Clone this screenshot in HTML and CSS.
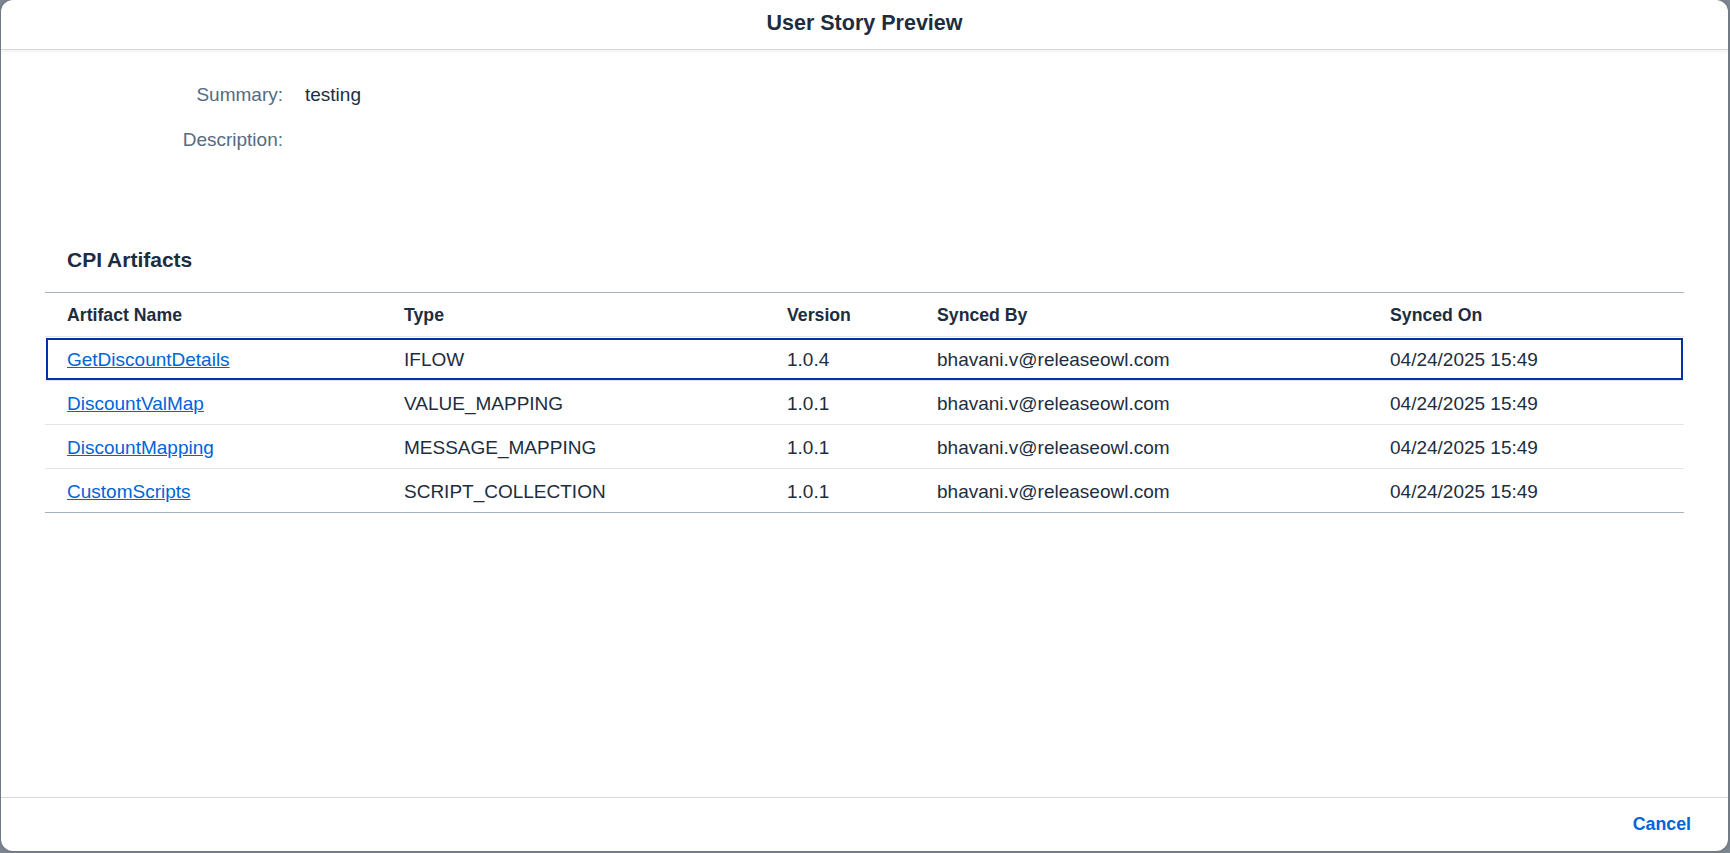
FILE: index.html
```html
<!DOCTYPE html>
<html lang="en">
<head>
<meta charset="utf-8">
<title>User Story Preview</title>
<link rel="stylesheet" href="styles.css">
</head>
<body>
<div class="dialog">
  <header class="dlg-header">User Story Preview</header>
  <main class="dlg-content">
    <div class="form">
      <div class="f-label">Summary:</div>
      <div class="f-value">testing</div>
      <div class="f-label">Description:</div>
      <div class="f-value"></div>
    </div>
    <h2 class="section-title">CPI Artifacts</h2>
    <div class="table">
      <div class="row head">
        <div class="cell">Artifact Name</div>
        <div class="cell">Type</div>
        <div class="cell">Version</div>
        <div class="cell">Synced By</div>
        <div class="cell">Synced On</div>
      </div>
      <div class="row focused">
        <div class="cell"><a class="link" href="#">GetDiscountDetails</a></div>
        <div class="cell">IFLOW</div>
        <div class="cell">1.0.4</div>
        <div class="cell">bhavani.v@releaseowl.com</div>
        <div class="cell">04/24/2025 15:49</div>
      </div>
      <div class="row">
        <div class="cell"><a class="link" href="#">DiscountValMap</a></div>
        <div class="cell">VALUE_MAPPING</div>
        <div class="cell">1.0.1</div>
        <div class="cell">bhavani.v@releaseowl.com</div>
        <div class="cell">04/24/2025 15:49</div>
      </div>
      <div class="row">
        <div class="cell"><a class="link" href="#">DiscountMapping</a></div>
        <div class="cell">MESSAGE_MAPPING</div>
        <div class="cell">1.0.1</div>
        <div class="cell">bhavani.v@releaseowl.com</div>
        <div class="cell">04/24/2025 15:49</div>
      </div>
      <div class="row last">
        <div class="cell"><a class="link" href="#">CustomScripts</a></div>
        <div class="cell">SCRIPT_COLLECTION</div>
        <div class="cell">1.0.1</div>
        <div class="cell">bhavani.v@releaseowl.com</div>
        <div class="cell">04/24/2025 15:49</div>
      </div>
    </div>
  </main>
  <footer class="dlg-footer">
    <button class="btn-cancel" type="button">Cancel</button>
  </footer>
</div>
</body>
</html>
```
FILE: styles.css
```css
* { box-sizing: border-box; }

html, body {
  margin: 0;
  height: 853px;
  overflow: hidden;
}

body {
  background: #7d8792;
  font-family: "Liberation Sans", Arial, sans-serif;
  color: #1d2d3e;
  font-size: 19px;
  padding: 0 2px 2px 1px;
}

.dialog {
  height: 851px;
  background: #fff;
  border-radius: 12px;
  display: flex;
  flex-direction: column;
  overflow: hidden;
  box-shadow: 0 0 4px rgba(0,0,0,0.25);
}

.dlg-header {
  height: 50px;
  flex: none;
  text-align: center;
  font-weight: bold;
  font-size: 21.5px;
  line-height: 47px;
  border-bottom: 1px solid #d9d9d9;
  box-shadow: 0 2px 3px rgba(0,0,0,0.05);
  position: relative;
}

.dlg-content {
  flex: 1;
  padding: 0 44px;
}

.form {
  margin-top: 22px;
  display: grid;
  grid-template-columns: 238px 1fr;
  column-gap: 22px;
  grid-auto-rows: 45px;
  line-height: 45px;
}

.f-label {
  text-align: right;
  color: #556b82;
}

.section-title {
  margin: 83px 0 17px;
  padding-left: 22px;
  font-size: 21px;
  font-weight: bold;
  line-height: 30px;
}

.table {
  border-top: 1px solid #a9b2bb;
}

.row {
  display: grid;
  grid-template-columns: 337px 383px 150px 453px 1fr;
  height: 44px;
  align-items: center;
  border-bottom: 1px solid #e5e5e5;
}

.row.last {
  border-bottom-color: #a9b2bb;
}

.row.head .cell {
  font-weight: bold;
  font-size: 17.7px;
}

.row.focused {
  outline: 2px solid #0032a5;
  outline-offset: -3px;
}

.cell {
  padding: 2px 0 0 22px;
  white-space: nowrap;
}

.link {
  color: #0064d9;
  text-decoration: underline;
}

.dlg-footer {
  height: 54px;
  flex: none;
  border-top: 1px solid #d9d9d9;
  display: flex;
  justify-content: flex-end;
  align-items: center;
  padding-right: 37px;
}

.btn-cancel {
  border: 0;
  background: none;
  padding: 0;
  font-family: inherit;
  font-size: 17.8px;
  font-weight: bold;
  color: #0064d9;
}
```
